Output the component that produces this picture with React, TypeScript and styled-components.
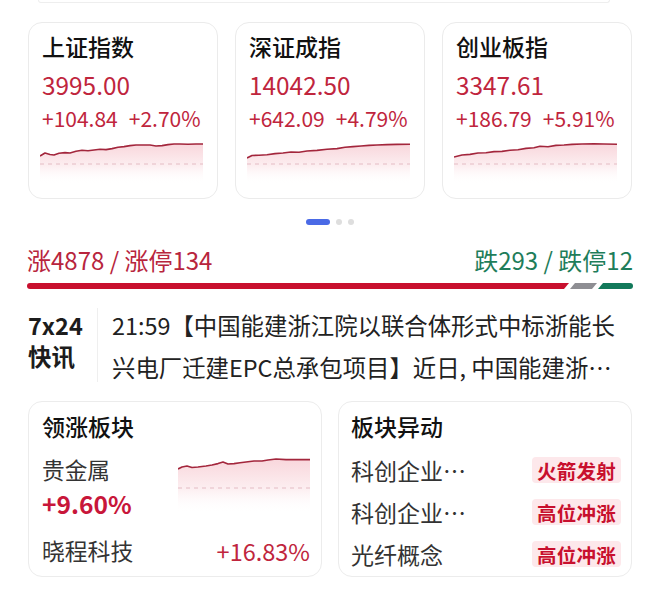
import React from 'react';
import styled, { createGlobalStyle } from 'styled-components';

const Global = createGlobalStyle`
  html, body { margin: 0; padding: 0; background: #ffffff; }
  body {
    font-family: "Noto Sans CJK SC", "Noto Sans", sans-serif;
    color: #151515;
    -webkit-font-smoothing: antialiased;
  }
  * { box-sizing: border-box; }
`;

const RED = '#c0253d';
const GREEN = '#1e7d5a';

const Page = styled.div`
  width: 660px;
  height: 598px;
  overflow: hidden;
  background: #fff;
`;

const TopStub = styled.div`
  margin-left: 38px;
  width: 572px;
  height: 3px;
  border: 1px solid #eeeeee;
  border-top: none;
  border-radius: 0 0 12px 12px;
`;

const IndexRow = styled.div`
  display: grid;
  grid-template-columns: repeat(3, 190px);
  column-gap: 17px;
  padding: 19px 0 0 28px;
`;

const IndexCard = styled.div`
  height: 177px;
  border: 1px solid #ebebeb;
  border-radius: 14px;
  padding: 8px 0 0 13px;
  display: flex;
  flex-direction: column;
  overflow: hidden;
`;

const CardTitle = styled.div`
  font-size: 23px;
  line-height: 30px;
  font-weight: 500;
  color: #111;
  white-space: nowrap;
`;

const Price = styled.div`
  margin-top: 9px;
  font-size: 24.4px;
  line-height: 30px;
  color: ${RED};
`;

const Change = styled.div`
  margin-top: 3px;
  font-size: 21px;
  line-height: 30px;
  color: ${RED};
  display: flex;
  gap: 11px;
  white-space: nowrap;
`;

const ChartSvg = styled.svg<{ $ml?: number; $mt?: number }>`
  display: block;
  margin-left: ${p => p.$ml ?? 0}px;
  margin-top: ${p => p.$mt ?? 0}px;
`;

const Dots = styled.div`
  display: flex;
  justify-content: center;
  align-items: center;
  gap: 6px;
  margin-top: 20px;
  height: 6px;
`;

const Dot = styled.span<{ $active?: boolean }>`
  display: block;
  width: ${p => (p.$active ? 24 : 6)}px;
  height: 6px;
  border-radius: 3px;
  background: ${p => (p.$active ? '#4a6ae6' : '#dedede')};
`;

const StatsRow = styled.div`
  display: flex;
  justify-content: space-between;
  padding: 0 27px 0 27px;
  margin-top: 20px;
  font-size: 24px;
  line-height: 30px;
`;

const StatText = styled.span<{ $up?: boolean }>`
  color: ${p => (p.$up ? '#b8253d' : GREEN)};
  white-space: nowrap;
`;

const Bar = styled.div`
  display: flex;
  gap: 2px;
  margin: 8px 27px 0 27px;
  height: 6px;
`;

const BarSeg = styled.div<{ $color: string; $w?: number; $kind: 'left' | 'mid' | 'right' }>`
  flex: ${p => (p.$w ? `0 0 ${p.$w}px` : '1 1 auto')};
  margin-left: ${p => (p.$kind === 'left' ? 0 : -1)}px;
  background: ${p => p.$color};
  border-radius: ${p => (p.$kind === 'left' ? '3px 0 0 3px' : p.$kind === 'right' ? '0 3px 3px 0' : '0')};
  clip-path: ${p =>
    p.$kind === 'left'
      ? 'polygon(0 0, 100% 0, calc(100% - 5px) 100%, 0 100%)'
      : p.$kind === 'mid'
      ? 'polygon(5px 0, 100% 0, calc(100% - 5px) 100%, 0 100%)'
      : 'polygon(5px 0, 100% 0, 100% 100%, 0 100%)'};
`;

const News = styled.div`
  display: flex;
  margin-top: 15px;
  padding: 0 27px;
`;

const NewsLabel = styled.div`
  width: 70px;
  flex: 0 0 70px;
  display: flex;
  flex-direction: column;
  font-size: 23.5px;
  font-weight: 700;
  line-height: 31px;
  color: #1c1c1c;
  padding-top: 6px;
  padding-left: 1px;
`;

const NewsDivider = styled.div`
  width: 1px;
  background: #efefef;
  margin: 4px 0 6px 0;
`;

const NewsBody = styled.div`
  flex: 1;
  min-width: 0;
  padding-left: 14px;
  font-size: 23.4px;
  line-height: 42px;
  color: #222;
`;

const NewsLine = styled.div`
  white-space: nowrap;
`;

const BottomRow = styled.div`
  display: grid;
  grid-template-columns: 294px 294px;
  column-gap: 16px;
  padding: 13px 0 0 28px;
`;

const SectorCard = styled.div<{ $pl: number; $pr: number }>`
  height: 176px;
  border: 1px solid #ececec;
  border-radius: 14px;
  padding: 9px ${p => p.$pr}px 0 ${p => p.$pl}px;
  display: flex;
  flex-direction: column;
`;

const SectorTitle = styled.div`
  font-size: 23px;
  line-height: 30px;
  font-weight: 500;
  color: #111;
`;

const LeadRow = styled.div`
  display: grid;
  grid-template-columns: 1fr 132px;
  margin-top: 14px;
`;

const LeadInfo = styled.div`
  display: flex;
  flex-direction: column;
`;

const LeadName = styled.div`
  font-size: 22.7px;
  line-height: 30px;
  color: #333;
`;

const LeadPct = styled.div`
  margin-top: 2px;
  font-size: 24.6px;
  line-height: 32px;
  font-weight: 700;
  color: #c8163a;
`;

const StockRow = styled.div`
  display: flex;
  justify-content: space-between;
  align-items: center;
  margin-top: 17px;
  font-size: 22.8px;
  line-height: 30px;
`;

const StockName = styled.span`
  color: #333;
`;

const StockPct = styled.span`
  color: ${RED};
  font-size: 23.5px;
`;

const MoveList = styled.div`
  display: flex;
  flex-direction: column;
  margin-top: 8px;
`;

const MoveRow = styled.div`
  display: flex;
  justify-content: space-between;
  align-items: center;
  height: 42px;
`;

const MoveName = styled.span`
  font-size: 23px;
  color: #333;
  white-space: nowrap;
`;

const Tag = styled.span`
  display: inline-flex;
  align-items: center;
  justify-content: center;
  width: 89px;
  height: 26px;
  border-radius: 4px;
  background: #fde8eb;
  color: #c8102e;
  font-size: 19.5px;
  font-weight: 700;
  letter-spacing: 0.2px;
`;

type Pt = [number, number];

const toPath = (pts: Pt[]) => pts.map((p, i) => `${i === 0 ? 'M' : 'L'}${p[0]} ${p[1]}`).join(' ');

function MiniChart({ pts, w, h, dash, id, ml, mt }: { pts: Pt[]; w: number; h: number; dash: number; id: string; ml?: number; mt?: number }) {
  const line = toPath(pts);
  const last = pts[pts.length - 1];
  const area = `${line} L${last[0]} ${h} L${pts[0][0]} ${h} Z`;
  return (
    <ChartSvg width={w} height={h} viewBox={`0 0 ${w} ${h}`} $ml={ml} $mt={mt}>
      <defs>
        <linearGradient id={id} x1="0" y1="0" x2="0" y2="1">
          <stop offset="0" stopColor="#e2475f" stopOpacity="0.22" />
          <stop offset="0.55" stopColor="#e2475f" stopOpacity="0.09" />
          <stop offset="1" stopColor="#ffffff" stopOpacity="0" />
        </linearGradient>
      </defs>
      <path d={area} fill={`url(#${id})`} />
      <line x1="0" y1={dash} x2={w} y2={dash} stroke="#e3bcc3" strokeWidth="1.2" strokeDasharray="4 4" />
      <path d={line} fill="none" stroke="#a3263c" strokeWidth="1.6" strokeLinejoin="round" />
    </ChartSvg>
  );
}

const chart1: Pt[] = [[0,16],[5,13],[10,14.5],[14,15],[19,13.2],[25,12.6],[30,13],[36,11.2],[42,10.2],[48,10.8],[54,10],[60,9.2],[66,9.6],[72,8.6],[78,7.2],[84,6.6],[90,5.6],[96,5],[102,5],[110,5],[116,6],[122,5.6],[128,4.6],[134,4],[140,4],[148,4.3],[156,4],[163,4]];
const chart2: Pt[] = [[0,18],[5,15.5],[12,15.2],[20,14.8],[28,13.6],[36,13],[44,12],[52,12.3],[60,11],[70,10.4],[80,9.2],[90,8.6],[98,7.2],[106,6.6],[114,6],[122,5.4],[130,5],[140,4.6],[150,4.4],[163,4.2]];
const chart3: Pt[] = [[0,17],[8,15],[16,14.4],[24,13],[32,12.8],[40,11.6],[48,11.4],[56,10.2],[64,9.8],[72,8.4],[80,7.8],[86,6.2],[94,6.8],[102,5.4],[110,5],[118,4.4],[128,4],[140,3.8],[150,4],[163,4.2]];
const chartLead: Pt[] = [[0,14],[4,12],[9,11],[14,12.5],[20,12],[28,11],[34,10],[40,8.6],[45,7],[50,9],[56,8.6],[62,7.8],[68,7],[76,6],[84,6],[90,5],[98,4],[108,4.6],[118,4.6],[132,4.6]];

const indices = [
  { name: '上证指数', price: '3995.00', chg: '+104.84', pct: '+2.70%', pts: chart1 },
  { name: '深证成指', price: '14042.50', chg: '+642.09', pct: '+4.79%', pts: chart2 },
  { name: '创业板指', price: '3347.61', chg: '+186.79', pct: '+5.91%', pts: chart3 },
];

const moves = [
  { name: '科创企业…', tag: '火箭发射' },
  { name: '科创企业…', tag: '高位冲涨' },
  { name: '光纤概念', tag: '高位冲涨' },
];

export default function App() {
  return (
    <Page>
      <Global />
      <TopStub />
      <IndexRow>
        {indices.map((d, i) => (
          <IndexCard key={d.name}>
            <CardTitle>{d.name}</CardTitle>
            <Price>{d.price}</Price>
            <Change>
              <span>{d.chg}</span>
              <span>{d.pct}</span>
            </Change>
            <MiniChart pts={d.pts} w={163} h={44} dash={24} id={`g${i}`} ml={-2} mt={7} />
          </IndexCard>
        ))}
      </IndexRow>
      <Dots>
        <Dot $active />
        <Dot />
        <Dot />
      </Dots>
      <StatsRow>
        <StatText $up>涨4878 / 涨停134</StatText>
        <StatText>跌293 / 跌停12</StatText>
      </StatsRow>
      <Bar>
        <BarSeg $color="#c8102e" $kind="left" />
        <BarSeg $color="#8e8e93" $w={27} $kind="mid" />
        <BarSeg $color="#12795a" $w={35} $kind="right" />
      </Bar>
      <News>
        <NewsLabel>
          <span>7x24</span>
          <span>快讯</span>
        </NewsLabel>
        <NewsDivider />
        <NewsBody>
          <NewsLine>21:59【中国能建浙江院以联合体形式中标浙能长</NewsLine>
          <NewsLine>兴电厂迁建EPC总承包项目】近日, 中国能建浙…</NewsLine>
        </NewsBody>
      </News>
      <BottomRow>
        <SectorCard $pl={13} $pr={11}>
          <SectorTitle>领涨板块</SectorTitle>
          <LeadRow>
            <LeadInfo>
              <LeadName>贵金属</LeadName>
              <LeadPct>+9.60%</LeadPct>
            </LeadInfo>
            <MiniChart pts={chartLead} w={132} h={58} dash={33} id="gl" />
          </LeadRow>
          <StockRow>
            <StockName>晓程科技</StockName>
            <StockPct>+16.83%</StockPct>
          </StockRow>
        </SectorCard>
        <SectorCard $pl={12} $pr={10}>
          <SectorTitle>板块异动</SectorTitle>
          <MoveList>
            {moves.map((m, i) => (
              <MoveRow key={i}>
                <MoveName>{m.name}</MoveName>
                <Tag>{m.tag}</Tag>
              </MoveRow>
            ))}
          </MoveList>
        </SectorCard>
      </BottomRow>
    </Page>
  );
}
